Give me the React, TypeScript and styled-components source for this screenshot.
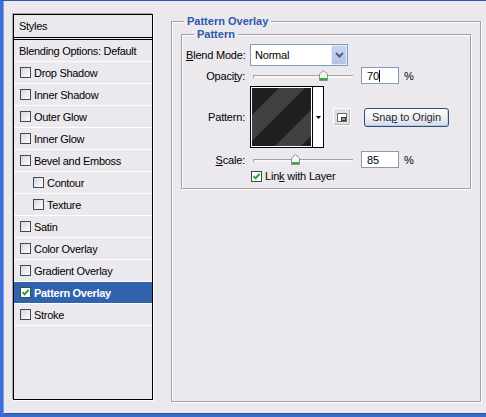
import * as React from 'react';
import styled, { createGlobalStyle } from 'styled-components';

const GlobalStyle = createGlobalStyle`
  html, body {
    margin: 0;
    padding: 0;
    background: #ebe9ed;
  }
  body {
    font-family: "Liberation Sans", Arial, sans-serif;
    font-size: 11px;
    color: #000;
  }
`;

const Window = styled.div`
  box-sizing: border-box;
  width: 486px;
  height: 417px;
  background: #ebe9ed;
  border-left: 3px solid #3f6fd4;
  border-top: 1px solid #2a56b0;
  border-bottom: 3px solid #3a6ad0;
  box-shadow: inset 1px 0 0 #7a9de6, inset 0 -1px 0 #2a56b0;
  display: flex;
  align-items: flex-start;
  padding: 13px 0 0 10px;
  gap: 18px;
`;

/* ---------- left list ---------- */

const StyleList = styled.div`
  box-sizing: border-box;
  width: 140px;
  height: 386px;
  border: 1px solid #000;
  box-shadow: -1px -1px 0 #a7a6aa, 1px 1px 0 #fff;
  display: flex;
  flex-direction: column;
  letter-spacing: -0.3px;
`;

const ListHeader = styled.div`
  height: 22px;
  padding-left: 5px;
  display: flex;
  align-items: center;
  border-bottom: 3px double #000;
`;

const ListRow = styled.div<{ $selected?: boolean; $indent?: boolean }>`
  height: 21px;
  flex: none;
  border-bottom: 1px solid #fff;
  display: flex;
  align-items: center;
  gap: 3px;
  padding-left: ${p => (p.$indent ? 19 : 6)}px;
  background: ${p => (p.$selected ? '#3162ae' : 'transparent')};
  color: ${p => (p.$selected ? '#fff' : '#000')};
  font-weight: ${p => (p.$selected ? 'bold' : 'normal')};
`;

const PlainRow = styled(ListRow)`
  padding-left: 5px;
`;

const CheckBox = styled.span<{ $checked?: boolean }>`
  box-sizing: border-box;
  width: 11px;
  height: 11px;
  flex: none;
  border: 1px solid #3b4b5e;
  background: ${p => (p.$checked ? '#fff' : 'linear-gradient(135deg, #d6d5d2 0%, #f4f4f2 70%, #fff 100%)')};
  display: flex;
  align-items: center;
  justify-content: center;
`;

const Tick = () => (
  <svg width="9" height="9" viewBox="0 0 9 9">
    <path d="M1.5 4.2 L3.6 6.4 L7.6 1.8" fill="none" stroke="#21a121" strokeWidth="1.9" />
  </svg>
);

const Check = ({ checked }: { checked?: boolean }) => (
  <CheckBox $checked={checked}>{checked && <Tick />}</CheckBox>
);

/* ---------- right panel ---------- */

const GroupBox = styled.fieldset<{ $inner?: boolean }>`
  box-sizing: border-box;
  margin: ${p => (p.$inner ? '0' : '1px 0 0 0')};
  min-width: 0;
  width: ${p => (p.$inner ? 290 : 310)}px;
  height: ${p => (p.$inner ? 'auto' : '387px')};
  border: 1px solid #a1a1a5;
  box-shadow: inset 1px 1px 0 #fff, 1px 1px 0 #fff;
  padding: ${p => (p.$inner ? '0 9px 5px 4px' : '0 9px')};
`;

const Legend = styled.legend<{ $inner?: boolean }>`
  font-weight: bold;
  color: #2f58a8;
  line-height: 13px;
  padding: 0 3px;
  margin-left: ${p => (p.$inner ? 8 : 3)}px;
  background: #ebe9ed;
`;

const FormRow = styled.div<{ $h: number; $top: number }>`
  display: flex;
  align-items: center;
  height: ${p => p.$h}px;
  margin-top: ${p => p.$top}px;
  letter-spacing: -0.2px;
`;

const Label = styled.span`
  width: 59px;
  flex: none;
  margin-right: 5px;
  text-align: right;
  white-space: nowrap;
`;

const Key = styled.span`
  text-decoration: underline;
`;

const Select = styled.div`
  box-sizing: border-box;
  width: 98px;
  height: 22px;
  border: 1px solid #7f9db9;
  background: #fff;
  display: flex;
  align-items: center;
  padding: 0 0 0 4px;
`;

const SelectButton = styled.span`
  box-sizing: border-box;
  margin-left: auto;
  width: 16px;
  height: 20px;
  border: 1px solid #e4ebfa;
  border-radius: 2px;
  background: linear-gradient(#c9d6f0, #b1c2e6);
  display: flex;
  align-items: center;
  justify-content: center;
`;

const Slider = styled.div`
  position: relative;
  width: 100px;
  height: 17px;
  margin-left: 3px;
  flex: none;
`;

const Track = styled.div`
  position: absolute;
  left: 0;
  right: 0;
  top: 8px;
  height: 2px;
  border-top: 1px solid #a3a3a3;
  border-left: 1px solid #a3a3a3;
  background: #f6f6f6;
`;

const Thumb = styled.svg`
  position: absolute;
  top: 3px;
`;

const NumberBox = styled.div`
  box-sizing: border-box;
  width: 38px;
  height: 17px;
  margin-left: 8px;
  border: 1px solid #7f9db9;
  background: #fff;
  padding-left: 5px;
  display: flex;
  align-items: center;
`;

const Caret = styled.span`
  width: 1px;
  height: 12px;
  background: #000;
`;

const Percent = styled.span`
  margin-left: 5px;
`;

const Picker = styled.div`
  box-sizing: border-box;
  width: 74px;
  height: 62px;
  border: 1px solid #000;
  background: #fff;
  display: flex;
`;

const Swatch = styled.div`
  margin: 1px;
  width: 59px;
  height: 58px;
  display: flex;
`;

const PickerArrow = styled.div`
  flex: 1;
  border-left: 1px solid #000;
  display: flex;
  align-items: center;
  justify-content: center;
`;

const IconButton = styled.div`
  box-sizing: border-box;
  width: 18px;
  height: 18px;
  margin-left: 9px;
  border: 1px solid #fff;
  box-shadow: inset -1px -1px 0 #b9b8bc;
  background: #e2e0e4;
  display: flex;
  align-items: center;
  justify-content: center;
`;

const Button = styled.div`
  box-sizing: border-box;
  width: 85px;
  height: 19px;
  margin-left: 13px;
  border: 1px solid #2d4f7c;
  border-radius: 3px;
  background: linear-gradient(#fefefe 0%, #f2f2f0 45%, #d9dce8 100%);
  box-shadow: inset 0 -1px 0 #b9c7e0, inset -1px 0 0 #c7d3ea;
  display: flex;
  align-items: center;
  justify-content: center;
  color: #1d2a3e;
  letter-spacing: -0.1px;
  white-space: nowrap;
`;

const LinkRow = styled(FormRow)`
  padding-left: 65px;
  gap: 3px;
`;

const SliderThumb = ({ pos }: { pos: number }) => (
  <Thumb width="9" height="11" viewBox="0 0 9 11" style={{ left: pos - 4 }}>
    <path d="M0.5 4 L4.5 0.5 L8.5 4 L8.5 10.5 L0.5 10.5 Z" fill="#f6f6f4" stroke="#8c9196" />
    <rect x="1" y="8" width="7" height="2" fill="#2fae3a" />
  </Thumb>
);

const PatternArt = () => (
  <svg width="59" height="58" viewBox="0 0 59 58">
    <rect width="59" height="58" fill="#1f1f1f" />
    <polygon points="27,0 53,0 0,53 0,27" fill="#414141" />
    <polygon points="59,22 59,48 49,58 23,58" fill="#414141" />
  </svg>
);

const layers: { name: string; indent?: boolean; checked?: boolean; selected?: boolean }[] = [
  { name: 'Drop Shadow' },
  { name: 'Inner Shadow' },
  { name: 'Outer Glow' },
  { name: 'Inner Glow' },
  { name: 'Bevel and Emboss' },
  { name: 'Contour', indent: true },
  { name: 'Texture', indent: true },
  { name: 'Satin' },
  { name: 'Color Overlay' },
  { name: 'Gradient Overlay' },
  { name: 'Pattern Overlay', checked: true, selected: true },
  { name: 'Stroke' },
];

export default function App() {
  return (
    <>
      <GlobalStyle />
      <Window>
        <StyleList>
          <ListHeader>Styles</ListHeader>
          <PlainRow>Blending Options: Default</PlainRow>
          {layers.map(l => (
            <ListRow key={l.name} $indent={l.indent} $selected={l.selected}>
              <Check checked={l.checked} />
              {l.name}
            </ListRow>
          ))}
        </StyleList>

        <GroupBox>
          <Legend>Pattern Overlay</Legend>
          <GroupBox $inner>
            <Legend $inner>Pattern</Legend>

            <FormRow $h={22} $top={3}>
              <Label><Key>B</Key>lend Mode:</Label>
              <Select>
                Normal
                <SelectButton>
                  <svg width="9" height="6" viewBox="0 0 9 6">
                    <path d="M1 1 L4.5 4.5 L8 1" fill="none" stroke="#4d6185" strokeWidth="2" />
                  </svg>
                </SelectButton>
              </Select>
            </FormRow>

            <FormRow $h={17} $top={1}>
              <Label>Opaci<Key>t</Key>y:</Label>
              <Slider>
                <Track />
                <SliderThumb pos={70} />
              </Slider>
              <NumberBox>70<Caret /></NumberBox>
              <Percent>%</Percent>
            </FormRow>

            <FormRow $h={62} $top={2}>
              <Label>Pattern:</Label>
              <Picker>
                <Swatch><PatternArt /></Swatch>
                <PickerArrow>
                  <svg width="5" height="3" viewBox="0 0 5 3">
                    <polygon points="0,0 5,0 2.5,3" fill="#000" />
                  </svg>
                </PickerArrow>
              </Picker>
              <IconButton>
                <svg width="10" height="9" viewBox="0 0 10 9">
                  <rect x="0.5" y="0.5" width="9" height="8" fill="#fff" stroke="#6b6b6b" />
                  <rect x="4" y="4" width="5" height="4" fill="#3a3a3a" />
                  <rect x="5" y="5" width="3" height="2" fill="#9a9a9a" />
                </svg>
              </IconButton>
              <Button><span>Sna<Key>p</Key> to Origin</span></Button>
            </FormRow>

            <FormRow $h={17} $top={3}>
              <Label><Key>S</Key>cale:</Label>
              <Slider>
                <Track />
                <SliderThumb pos={42} />
              </Slider>
              <NumberBox>85</NumberBox>
              <Percent>%</Percent>
            </FormRow>

            <LinkRow $h={14} $top={1}>
              <Check checked />
              <span>Lin<Key>k</Key> with Layer</span>
            </LinkRow>
          </GroupBox>
        </GroupBox>
      </Window>
    </>
  );
}
